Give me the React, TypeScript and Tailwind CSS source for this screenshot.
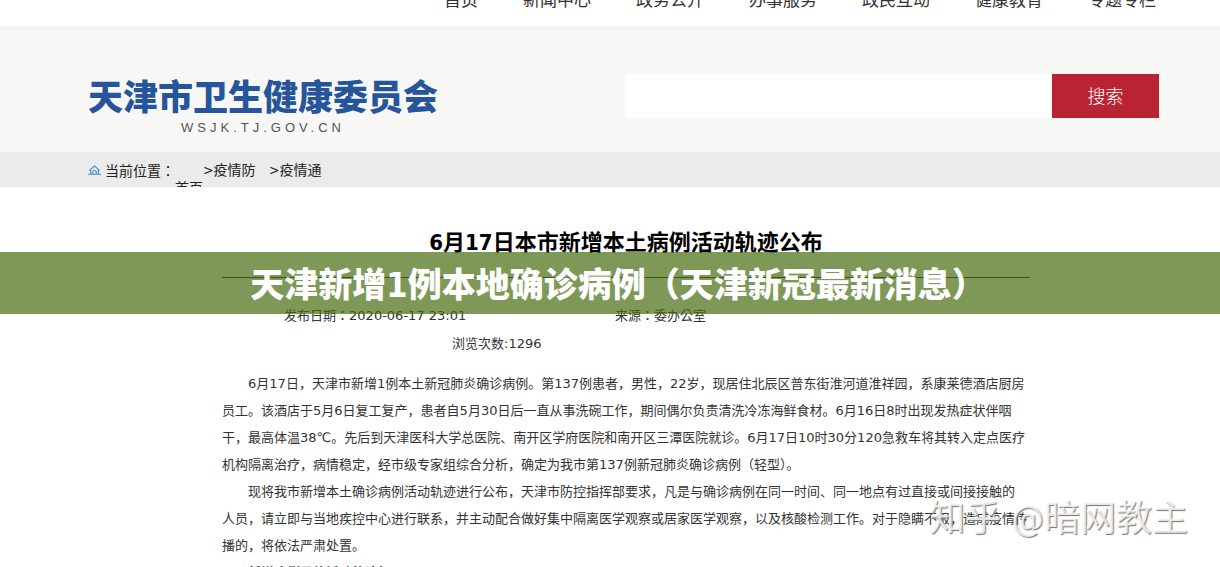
import { FormEvent, useState } from "react"

const navs = ["首页", "新闻中心", "政务公开", "办事服务", "政民互动", "健康教育", "专题专栏"]

const paragraphs = [
  [
    "6月17日，天津市新增1例本土新冠肺炎确诊病例。第137例患者，男性，22岁，现居住北辰区普东街淮河道淮祥园，系康莱德酒店厨房",
    "员工。该酒店于5月6日复工复产，患者自5月30日后一直从事洗碗工作，期间偶尔负责清洗冷冻海鲜食材。6月16日8时出现发热症状伴咽",
    "干，最高体温38℃。先后到天津医科大学总医院、南开区学府医院和南开区三潭医院就诊。6月17日10时30分120急救车将其转入定点医疗",
    "机构隔离治疗，病情稳定，经市级专家组综合分析，确定为我市第137例新冠肺炎确诊病例（轻型）。",
  ],
  [
    "现将我市新增本土确诊病例活动轨迹进行公布，天津市防控指挥部要求，凡是与确诊病例在同一时间、同一地点有过直接或间接接触的",
    "人员，请立即与当地疾控中心进行联系，并主动配合做好集中隔离医学观察或居家医学观察，以及核酸检测工作。对于隐瞒不报，造成疫情传",
    "播的，将依法严肃处置。",
  ],
]

const HomeIcon = () => (
  <svg viewBox="0 0 13 10" className="w-[13px] h-[10px] shrink-0" fill="none" stroke="#3f8fc9" strokeWidth="1.1">
    <path d="M1.2 5.6 L6.5 1 L11.8 5.6" />
    <path d="M2.8 5 V8.8 M10.2 5 V8.8 M0 9.2 H13" />
    <path d="M4.8 8.8 V6.6 Q6.5 4 8.2 6.6 V8.8" />
  </svg>
)

const Header = () => {
  const [keyword, setkeyword] = useState<string>("")
  return (
    <header>
      <nav className="h-[26px] overflow-hidden pl-[444px] flex gap-[45px] text-[17px] leading-6 text-[#333]">
        {navs.map((e) => (
          <a key={e} href="#" className="-mt-3 whitespace-nowrap">{e}</a>
        ))}
      </nav>
      <div className="h-[126px] bg-[#f7f7f5] border-t-4 border-[#f3f3f3] pl-[88px] pr-[61px] pt-11 flex justify-between">
        <a href="#" className="flex flex-col items-center">
          <span className="text-[35px] leading-[48px] font-black text-[#26559b]">天津市卫生健康委员会</span>
          <span className="font-['Liberation_Sans'] text-[13px] leading-3 tracking-[4px] text-[#555]">WSJK.TJ.GOV.CN</span>
        </a>
        <form className="flex w-[534px] h-11" onSubmit={(e: FormEvent) => e.preventDefault()}>
          <input
            type="text"
            aria-label="搜索"
            value={keyword}
            onChange={(e) => setkeyword(e.target.value)}
            className="flex-1 min-w-0 bg-white px-3 outline-none"
          />
          <button type="submit" className="w-[107px] bg-[#b92333] text-white text-[18px] font-light">搜索</button>
        </form>
      </div>
    </header>
  )
}

const Crumbs = () => (
  <div className="h-[35px] overflow-hidden bg-[#ebebeb] pl-[88px] flex text-[14px] leading-9 text-[#222]">
    <div className="flex items-center h-9 gap-1">
      <HomeIcon />
      <span className="font-['Noto_Sans_CJK_TC',sans-serif]">当前位置：</span>
    </div>
    <a href="#" className="w-7 pt-[18px]">首页</a>
    <a href="#" className="w-[66px]">&gt;疫情防</a>
    <a href="#">&gt;疫情通</a>
  </div>
)

const App = () => {
  return (
    <div className="relative h-screen overflow-hidden bg-white font-['DejaVu_Sans_Condensed','Noto_Sans_CJK_SC',sans-serif]">
      <Header />
      <Crumbs />
      <div className="pl-8">
        <main className="mx-auto w-[68%] pt-[38px] text-[#333]">
          <h1 className="text-center text-[22px] leading-9 font-bold text-black">6月17日本市新增本土病例活动轨迹公布</h1>
          <hr className="mt-4 border-[#222]" />
          <div className="pt-6 font-['DejaVu_Sans','Noto_Sans_CJK_TC',sans-serif] text-[13px] leading-7">
            <div className="flex pl-[62px]">
              <span className="w-[331px]">发布日期：2020-06-17 23:01</span>
              <span>来源：委办公室</span>
            </div>
            <div className="pl-[230px]">浏览次数:1296</div>
          </div>
          <article className="pt-3 font-['DejaVu_Sans','Noto_Sans_CJK_SC',sans-serif] text-[13px] leading-[27px] whitespace-nowrap">
            {paragraphs.map((lines, index) => (
              <p key={index} className="indent-[26px]">
                {lines.map((line) => (
                  <span key={line}>{line}<br /></span>
                ))}
              </p>
            ))}
            <p className="indent-[26px] font-bold">新增病例具体活动轨迹如下</p>
          </article>
        </main>
      </div>

      <div className="absolute inset-x-0 top-[252px] h-[62px] bg-[#466c0f]/70 flex items-center justify-center pl-4">
        <h2 className="text-[34px] leading-[60px] pt-1 font-black text-white whitespace-nowrap">天津新增1例本地确诊病例（天津新冠最新消息）</h2>
      </div>
      <div className="absolute right-8 bottom-6 text-[36px] leading-[48px] text-white/80 [text-shadow:1px_1px_1px_#777]">知乎 @暗网教主</div>
    </div>
  )
}

export default App
